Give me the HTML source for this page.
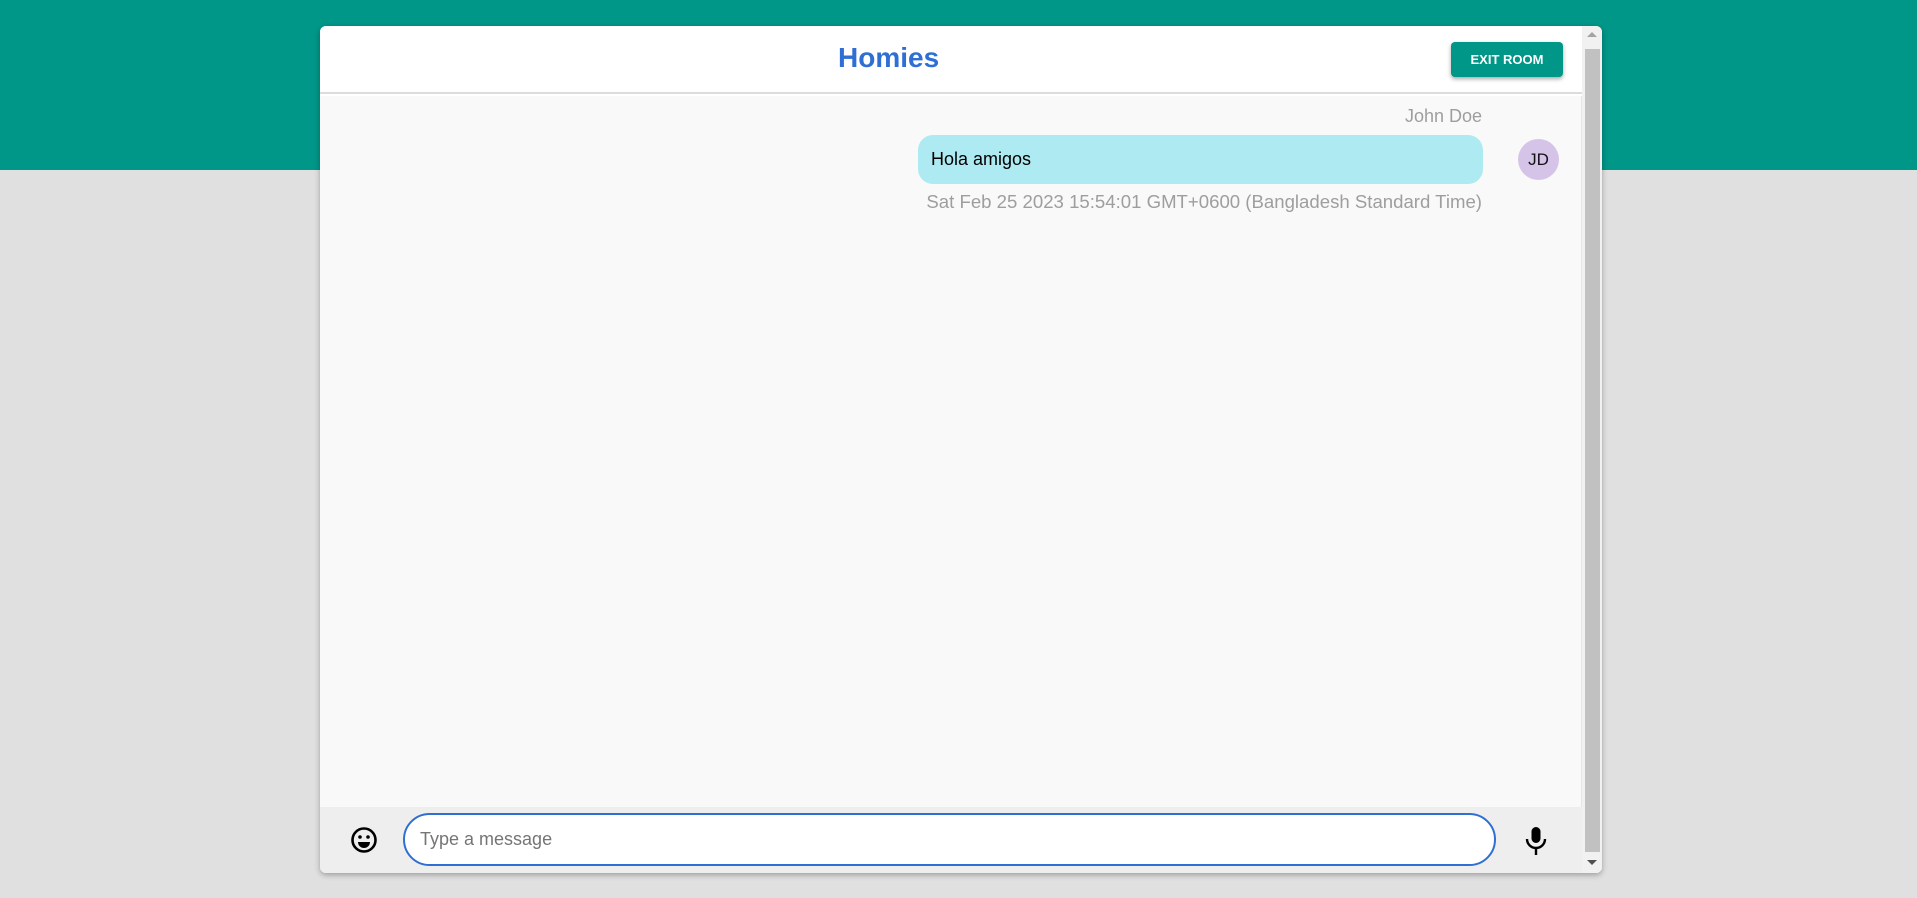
<!DOCTYPE html>
<html><head><meta charset="utf-8"><style>
*{box-sizing:border-box;margin:0;padding:0}
body{width:1917px;height:898px;background:#e0e0e0;font-family:"Liberation Sans",Arial,sans-serif;position:relative;overflow:hidden}
.band{position:absolute;left:0;top:0;width:1917px;height:170px;background:#009688}
.card{position:absolute;left:320px;top:26px;width:1282px;height:847px;background:#fff;border-radius:6px;box-shadow:0 2px 6px rgba(0,0,0,.3);overflow:hidden}
.header{position:absolute;left:0;top:0;width:1262px;height:68px;background:#fff;border-bottom:2px solid #dcdcdc}
.title{position:absolute;left:518px;top:16px;font-size:28px;font-weight:bold;color:#2f6fd4}
.exit{position:absolute;left:1131px;top:16px;width:112px;height:35px;background:#009688;border-radius:4px;color:#fff;font-size:13px;font-weight:bold;text-align:center;line-height:35px;box-shadow:0 2px 4px rgba(0,0,0,.35)}
.body{position:absolute;left:0;top:70px;width:1262px;height:711px;background:#f9f9f9;border-right:1px solid #e6e6e6}
.name{position:absolute;right:99px;top:10px;font-size:18px;color:#9e9e9e}
.bubble{position:absolute;left:598px;top:39px;width:565px;height:49px;background:#aeeaf2;border-radius:15px;font-size:18px;line-height:49px;padding-left:13px;color:#000}
.time{position:absolute;right:99px;top:95px;font-size:18.6px;color:#9e9e9e;white-space:nowrap}
.footer{position:absolute;left:0;top:781px;width:1262px;height:66px;background:#eeeeee}
.input{position:absolute;left:83px;top:6px;width:1093px;height:53px;border:2px solid #2f6fd4;border-radius:27px;background:#fff;font-size:18px;color:#757575;line-height:49px;padding-left:15px}
.sb{position:absolute;left:1262px;top:0;width:20px;height:847px;background:#f1f1f1}
.thumb{position:absolute;left:3px;top:23px;width:15px;height:803px;background:#c1c1c1}
</style></head><body>
<div class="band"></div>
<div class="card">
 <div class="header"><div class="title">Homies</div><div class="exit">EXIT ROOM</div></div>
 <div class="body">
  <div class="name">John Doe</div>
  <div class="bubble">Hola amigos</div>
  <div class="time">Sat Feb 25 2023 15:54:01 GMT+0600 (Bangladesh Standard Time)</div>
 </div>
 <div style="position:absolute;left:1198px;top:113px;width:41px;height:41px;border-radius:50%;background:#d6c3e8;text-align:center;line-height:41px;font-size:17px;color:#111">JD</div>
 <div class="footer">
  <svg style="position:absolute;left:29px;top:18px" width="30" height="30" viewBox="0 0 30 30"><circle cx="15" cy="15" r="11.5" fill="none" stroke="#000" stroke-width="2.6"/><circle cx="11" cy="12" r="1.8"/><circle cx="19" cy="12" r="1.8"/><path d="M9 17h12a6 6 0 0 1-12 0z"/></svg>
  <div class="input">Type a message</div>
  <svg style="position:absolute;left:1203px;top:20px" width="26" height="30" viewBox="0 0 26 30"><rect x="8.5" y="0" width="9" height="16" rx="4.5"/><path d="M4 12a9 9 0 0 0 18 0" fill="none" stroke="#000" stroke-width="2.4"/><rect x="11.8" y="20" width="2.4" height="8"/></svg>
 </div>
 <div class="sb"><div class="thumb"></div>
  <svg style="position:absolute;left:4px;top:5px" width="12" height="8"><path d="M1 6L6 1L11 6z" fill="#a3a3a3"/></svg>
  <svg style="position:absolute;left:4px;top:833px" width="12" height="8"><path d="M1 1L6 6L11 1z" fill="#505050"/></svg>
 </div>
</div>
</body></html>
